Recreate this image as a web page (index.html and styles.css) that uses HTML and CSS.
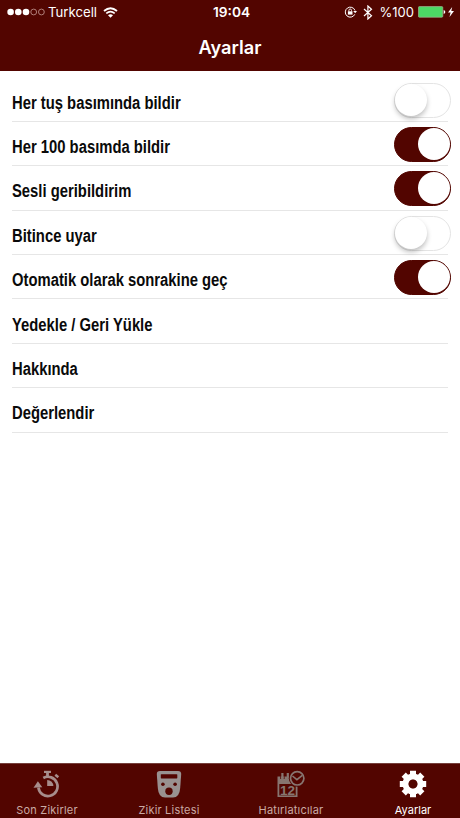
FILE: index.html
```html
<!DOCTYPE html>
<html lang="tr">
<head>
  <meta charset="UTF-8">
  <title>Ayarlar</title>
  <link rel="stylesheet" href="styles.css">
</head>
<body>
  <header>
    <div class="status">
      <div class="status-left">
        <svg class="signal" width="38" height="8" viewBox="0 0 38 8">
          <g fill="#fff"><circle cx="3.6" cy="4" r="3.3"/><circle cx="11.3" cy="4" r="3.3"/><circle cx="19" cy="4" r="3.3"/></g>
          <g fill="none" stroke="#b98a85" stroke-width=".9"><circle cx="26.7" cy="4" r="2.9"/><circle cx="34.4" cy="4" r="2.9"/></g>
        </svg>
        <span class="carrier">Turkcell</span>
        <svg class="wifi" width="15" height="11" viewBox="0 0 15 11">
          <path d="M1 4Q7.500-1.600 14 4" fill="none" stroke="#fff" stroke-width="1.800"/>
          <path d="M3.300 6.400Q7.500 2.800 11.700 6.400" fill="none" stroke="#fff" stroke-width="1.700"/>
          <path d="M5 8.200Q7.500 6.200 10 8.200L7.500 10.700Z" fill="#fff"/>
        </svg>
      </div>
      <span class="time">19:04</span>
      <div class="status-right">
        <svg class="lock" width="13" height="12" viewBox="0 0 13 12">
          <path d="M10.800 8.300A5 5 0 1 1 11 4.500" fill="none" stroke="#fff" stroke-width="1"/>
          <path d="M9.200 4.900H13L11.200 7.300Z" fill="#fff"/>
          <rect x="3.900" y="5.300" width="4.600" height="3.300" fill="#fff"/>
          <path d="M4.900 5.500V4.300a1.300 1.300 0 0 1 2.600 0V5.500" fill="none" stroke="#fff" stroke-width=".9"/>
        </svg>
        <svg class="bluetooth" width="10" height="15" viewBox="0 0 10 15">
          <path d="M1 4L8.500 10.800L4.900 14V1L8.500 4.200L1 11" fill="none" stroke="#fff" stroke-width="1.200"/>
        </svg>
        <span class="percent">%100</span>
        <svg class="battery" width="28" height="12" viewBox="0 0 28 12">
          <rect x=".4" y=".6" width="24.400" height="10.600" rx="1" fill="#4cd964" stroke="#a9b295" stroke-width=".7"/>
          <path d="M25.700 4Q27.300 4.300 27.300 6T25.700 8Z" fill="#fff"/>
        </svg>
        <svg class="bolt" width="6" height="10" viewBox="0 0 6 10">
          <path d="M4.200 0L0 5.600H2.600L1.500 10L6 4.100H3.300Z" fill="#fff"/>
        </svg>
      </div>
    </div>
    <h1>Ayarlar</h1>
  </header>

  <main>
    <div class="row"><span class="label">Her tuş basımında bildir</span><div class="toggle"></div></div>
    <div class="row"><span class="label">Her 100 basımda bildir</span><div class="toggle on"></div></div>
    <div class="row"><span class="label">Sesli geribildirim</span><div class="toggle on"></div></div>
    <div class="row"><span class="label">Bitince uyar</span><div class="toggle"></div></div>
    <div class="row"><span class="label">Otomatik olarak sonrakine geç</span><div class="toggle on"></div></div>
    <div class="row"><span class="label">Yedekle / Geri Yükle</span></div>
    <div class="row"><span class="label">Hakkında</span></div>
    <div class="row"><span class="label">Değerlendir</span></div>
  </main>

  <nav>
    <div class="tab">
      <svg width="28" height="28" viewBox="0 0 28 28">
        <g fill="none" stroke="#a78d8b" stroke-width="2.700">
          <path d="M5.400 17.500A9.600 9.600 0 1 0 10.300 8"/>
          <path d="M14.500 7.500V2.500" stroke-width="2.800"/>
          <path d="M11 1.900H18" stroke-width="2.200"/>
          <path d="M22.300 4.700L25.300 7.300" stroke-width="2.500"/>
        </g>
        <path d="M.500 17.800L4.900 11.300L9.300 17.300Z" fill="#a78d8b"/>
        <path d="M14.200 9.900A6.200 6.200 0 0 1 20.400 16.100H14.200Z" fill="#a78d8b"/>
      </svg>
      <span>Son Zikirler</span>
    </div>
    <div class="tab">
      <svg width="28" height="28" viewBox="0 0 28 28">
        <path d="M5 1H23Q26.300 1 26.200 4L25.200 18Q24.500 27.500 18 27.500H10Q3.500 27.500 2.800 18L1.800 4Q1.700 1 5 1Z" fill="#999190"/>
        <g fill="#520500"><rect x="5.800" y="4.200" width="16.500" height="4.200" rx=".6"/><circle cx="7.900" cy="14.300" r="1.800"/><circle cx="20.100" cy="14.300" r="1.800"/><circle cx="14" cy="21.300" r="3.700"/></g>
      </svg>
      <span>Zikir Listesi</span>
    </div>
    <div class="tab">
      <svg width="28" height="28" viewBox="0 0 28 28">
        <path d="M.500 6.500H20.500V27H.500Z" fill="#877570"/>
        <rect x="2.300" y="14" width="16.400" height="11.400" fill="#520500"/>
        <path d="M3.600 6.200V9M7.200 6.200V9" stroke="#520500" stroke-width=".8"/>
        <path d="M5.400 3V8M10.800 3V8" stroke="#877570" stroke-width="2.200"/>
        <circle cx="20.200" cy="8.300" r="8.400" fill="#520500"/>
        <circle cx="20.200" cy="8.300" r="6.700" fill="none" stroke="#877570" stroke-width="1.700"/>
        <path d="M15.500 6L19.900 9.700L25.300 5.300" fill="none" stroke="#877570" stroke-width="1.600"/>
        <text x="10.500" y="24.600" class="day">12</text>
      </svg>
      <span>Hatırlatıcılar</span>
    </div>
    <div class="tab active">
      <svg width="28" height="28" viewBox="0 0 28 28">
        <g stroke="#fff" stroke-width="6" stroke-linecap="butt">
          <path d="M14 .8V8M14 20V27.200M.800 14H8M20 14H27.200M4.700 4.700L9 9M19 19L23.300 23.300M4.700 23.300L9 19M19 9L23.300 4.700"/>
        </g>
        <circle cx="14" cy="14" r="7.500" fill="none" stroke="#fff" stroke-width="6"/>
        <circle cx="14" cy="14" r="4.300" fill="#520500"/>
      </svg>
      <span>Ayarlar</span>
    </div>
  </nav>
</body>
</html>
```
FILE: styles.css
```css
* {
  box-sizing: border-box;
}

body {
  margin: 0;
  height: 818px;
  display: flex;
  flex-direction: column;
  overflow: hidden;
  background-color: #fff;
  font-family: Inter, "Liberation Sans", sans-serif;
}

header {
  height: 71px;
  background-color: #520500;
  color: #fff;
}

.status {
  display: grid;
  grid-template-columns: 1fr auto 1fr;
  align-items: center;
  height: 24px;
  padding: 0 6px 0 7px;
  font-size: 13px;
  line-height: 24px;
}

.status-left, .status-right {
  display: flex;
  align-items: center;
}

.status-right {
  justify-content: flex-end;
}

.carrier {
  margin: 0 6px 0 3px;
  font-size: 13.200px;
}

.time {
  padding-left: 2px;
  font-size: 13.700px;
  font-weight: 600;
}

.bluetooth {
  margin: 0 7px 0 6px;
}

.percent {
  margin-right: 4px;
}

.bolt {
  margin-left: 2px;
}

h1 {
  margin: 0;
  font-size: 18.200px;
  font-weight: 600;
  line-height: 47px;
  text-align: center;
}

main {
  flex: 1;
  padding: 6.500px 12px 0 11.500px;
}

.row {
  display: flex;
  align-items: center;
  justify-content: space-between;
  height: 44.400px;
  border-bottom: 1px solid #e6e6e6;
}

/* condensed bold */
.label {
  padding-top: 8px;
  font-family: "Liberation Sans", Arial, sans-serif;
  font-size: 17.500px;
  font-weight: bold;
  color: #0a0a0a;
  white-space: nowrap;
  transform: scaleX(0.846);
  transform-origin: left;
}

.toggle {
  display: flex;
  width: 57px;
  height: 35px;
  margin: 2px -3px 0 0;
  border: 1.500px solid #e4e4e4;
  border-radius: 18px;
}

.toggle::before {
  content: "";
  width: 32px;
  height: 32px;
  border-radius: 50%;
  background-color: #fff;
  box-shadow: 0 3px 5px rgba(0, 0, 0, 0.25);
}

.toggle.on {
  justify-content: flex-end;
  background-color: #520500;
  border-color: #520500;
}

.toggle.on::before {
  box-shadow: none;
}

/* outer tabs run slightly past the screen edges */
nav {
  display: flex;
  justify-content: center;
  height: 55px;
  background-color: #520500;
  border-top: 1px solid #76403c;
}

.tab {
  flex: 0 0 122px;
  display: flex;
  flex-direction: column;
  align-items: center;
  padding-top: 6px;
  color: #c9a9a4;
  font-size: 11px;
  letter-spacing: 0.200px;
  line-height: 14px;
}

.tab span {
  margin-top: 5px;
}

.tab.active {
  color: #fff;
  letter-spacing: 0;
}

.day {
  fill: #877570;
  font-family: "Liberation Sans", Arial, sans-serif;
  font-size: 13.500px;
  font-weight: bold;
  letter-spacing: 0;
  text-anchor: middle;
}
```
